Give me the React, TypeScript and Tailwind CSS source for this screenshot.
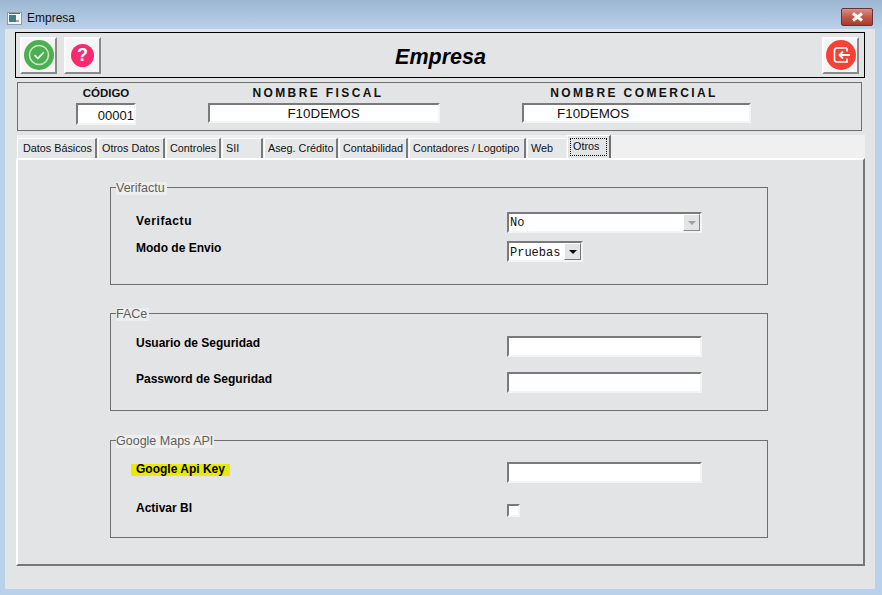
function Field({ className, children }: { className: string; children?: React.ReactNode }) {
    return (
        <div className={"border-2 border-t-[#7a7a7a] border-l-[#7a7a7a] border-r-[#f4f4f4] border-b-[#f4f4f4] bg-white " + className}>
            {children}
        </div>
    );
}

function ToolButton({ children, className = "" }: { children: React.ReactNode; className?: string }) {
    return (
        <div className={"flex h-[37px] w-[37px] items-center justify-center border-2 border-t-[#fbfbfb] border-l-[#fbfbfb] border-r-[#8a8a8a] border-b-[#8a8a8a] bg-[#f5f5f5] " + className}>
            {children}
        </div>
    );
}

function Tab({ label, width, active, noEdge }: { label: string; width: string; active?: boolean; noEdge?: boolean }) {
    if (active) {
        return (
            <div className={"relative z-10 ml-[1px] flex h-[23px] items-start border-t border-l border-white border-r-2 border-r-[#6f6f6f] bg-[#e3e4e6] p-[2px] " + width}>
                <span className="flex h-[18px] w-full items-center border border-dotted border-black pb-[2px] pl-[2px]">{label}</span>
            </div>
        );
    }
    return (
        <div className={"ml-[1px] flex h-[20px] items-center border-t border-l border-white bg-[#e6e7e8] pl-[3px] " + (noEdge ? "" : "border-r-2 border-r-[#7a7a7a] ") + width}>
            {label}
        </div>
    );
}

function Group({ title, legendWidth, children, className = "" }: { title: string; legendWidth: string; children: React.ReactNode; className?: string }) {
    return (
        <div className={"relative ml-[92px] h-[98px] w-[658px] border border-[#6f6f6f] " + className}>
            <span className={"absolute top-[-6px] left-[5px] h-[13px] bg-[#eeeeee] text-[12.5px] leading-[12px] font-normal text-[#5f5f5f] " + legendWidth}>{title}</span>
            {children}
        </div>
    );
}

function Label({ children, className = "" }: { children: React.ReactNode; className?: string }) {
    return <div className={"ml-[25px] w-[371px] text-[12px] leading-[14px] font-bold text-black " + className}>{children}</div>;
}

export default function App() {
    return (
        <div className="h-[595px] w-[882px] overflow-hidden bg-[#b9d1ea] font-['Liberation_Sans',Arial,sans-serif] text-[12px] text-[#111]">
            {/* barra de titulo */}
            <div className="flex h-[29px] items-center bg-gradient-to-b from-[#9db6d1] to-[#b9d1ea] pt-[7px] pl-[7px]">
                <svg width="15" height="13" viewBox="0 0 15 13">
                    <rect x="0.5" y="0.5" width="14" height="12" fill="#f4f4f4" stroke="#8f9aa5" />
                    <rect x="2" y="3" width="7" height="7" fill="#3f7f86" />
                    <rect x="9" y="8" width="3" height="2" fill="#9aa5ad" />
                    <rect x="2" y="1" width="11" height="1" fill="#5b6b78" />
                </svg>
                <span className="ml-[5px] text-[12px] text-[#111]">Empresa</span>
                <div className="mt-[1px] mr-[9px] ml-auto flex h-[18px] w-[32px] items-center justify-center self-start rounded-[2px] border border-[#6b2f35] bg-gradient-to-b from-[#d2928c] via-[#c0584a] to-[#a83a2e]">
                    <svg width="13" height="10" viewBox="0 0 13 10">
                        <path d="M2 1.5 L11 8.5 M11 1.5 L2 8.5" stroke="#ffffff" strokeWidth="3" />
                    </svg>
                </div>
            </div>

            {/* cuerpo */}
            <div className="mx-[5px] h-[560px] w-[870px] bg-[#e3e4e6] pt-[3px]">
                {/* toolbar */}
                <div className="ml-[10px] flex h-[46px] w-[850px] items-center border border-black pr-[5px] pl-[4px]">
                    <ToolButton>
                        <svg width="30" height="30" viewBox="0 0 30 30">
                            <circle cx="15" cy="15" r="15" fill="#4caf50" />
                            <circle cx="15" cy="15" r="9.5" fill="none" stroke="#c8e6c9" strokeWidth="1.6" />
                            <path d="M10.5 15.2 L13.8 18.5 L19.8 12.3" fill="none" stroke="#e8f5e9" strokeWidth="1.8" />
                        </svg>
                    </ToolButton>
                    <ToolButton className="ml-[7px]">
                        <div className="flex h-[23px] w-[23px] items-center justify-center rounded-full bg-[#f72a6e] text-[18px] font-bold text-white">?</div>
                    </ToolButton>
                    <div className="mt-[5px] flex-1 pr-[42px] text-center text-[21.5px] leading-none font-bold text-black italic">Empresa</div>
                    <ToolButton>
                        <svg width="30" height="30" viewBox="0 0 30 30">
                            <circle cx="15" cy="15" r="15" fill="#f44336" />
                            <path d="M21 8 H11 a2.5 2.5 0 0 0 -2.5 2.5 V19.5 a2.5 2.5 0 0 0 2.5 2.5 H21 V18.5 M21 11.5 V8" fill="none" stroke="#ffffff" strokeWidth="1.6" />
                            <path d="M24 15 H13.5 M17 11.5 L13.5 15 L17 18.5" fill="none" stroke="#ffffff" strokeWidth="1.8" />
                        </svg>
                    </ToolButton>
                </div>

                {/* cabecera */}
                <div className="mt-[4px] ml-[12px] flex h-[49px] w-[845px] border border-[#6f6f6f] font-bold">
                    <div className="ml-[58px] flex w-[60px] flex-col items-center">
                        <span className="mt-[3px] text-[11.5px] leading-[14px]">CÓDIGO</span>
                        <Field className="mt-[3px] h-[22px] w-[60px] text-right text-[13px] leading-[21px] font-normal">00001</Field>
                    </div>
                    <div className="ml-[72px] flex w-[232px] flex-col items-center">
                        <span className="mt-[3px] pr-[12px] text-[12px] leading-[14px] tracking-[2.4px]">NOMBRE FISCAL</span>
                        <Field className="mt-[3px] h-[20px] w-[232px] pr-[1px] text-center text-[13.4px] leading-[18px] font-normal">F10DEMOS</Field>
                    </div>
                    <div className="ml-[82px] flex w-[229px] flex-col items-center">
                        <span className="mt-[3px] pr-[5px] text-[12px] leading-[14px] tracking-[2.4px]">NOMBRE COMERCIAL</span>
                        <Field className="mt-[3px] h-[20px] w-[229px] pl-[33px] text-[13.4px] leading-[18px] font-normal">F10DEMOS</Field>
                    </div>
                </div>

                {/* pestañas */}
                <div className="mt-[4px] ml-[12px] flex h-[23px] w-[848px] items-end bg-[#f0f0f0] text-[10.8px] whitespace-nowrap text-[#111] [&>*:first-child]:ml-0 [&>*:first-child]:pl-[5px]">
                    <Tab label="Datos Básicos" width="w-[80px]" />
                    <Tab label="Otros Datos" width="w-[67px]" />
                    <Tab label="Controles" width="w-[55px]" />
                    <Tab label="SII" width="w-[41px]" />
                    <Tab label="Aseg. Crédito" width="w-[74px]" />
                    <Tab label="Contabilidad" width="w-[69px]" />
                    <Tab label="Contadores / Logotipo" width="w-[117px]" />
                    <Tab label="Web" width="w-[39px]" noEdge />
                    <Tab label="Otros" width="w-[44px]" active />
                </div>

                {/* panel */}
                <div className="ml-[11px] h-[408px] w-[849px] border-2 border-t-white border-r-[#777] border-b-[#777] border-l-white pt-[27px]">
                    <Group title="Verifactu" legendWidth="w-[51px]">
                        <div className="flex pt-[24px]">
                            <Label className="mt-[2px] tracking-[0.6px]">Verifactu</Label>
                            <Field className="relative h-[21px] w-[195px] pl-[1px] font-['Liberation_Mono',monospace] text-[12px] leading-[19px]">
                                No
                                <div className="absolute top-0 right-0 flex h-[17px] w-[17px] items-center justify-center border border-t-white border-r-[#888] border-b-[#888] border-l-white bg-[#e3e4e6]">
                                    <div className="h-0 w-0 border-x-[4px] border-t-[4px] border-x-transparent border-t-[#a0a0a0]" />
                                </div>
                            </Field>
                        </div>
                        <div className="mt-[8px] flex">
                            <Label>Modo de Envio</Label>
                            <Field className="relative h-[21px] w-[76px] pl-[1px] font-['Liberation_Mono',monospace] text-[12px] leading-[20px]">
                                Pruebas
                                <div className="absolute top-0 right-0 flex h-[17px] w-[17px] items-center justify-center border border-t-white border-r-[#777] border-b-[#777] border-l-white bg-[#e3e4e6]">
                                    <div className="h-0 w-0 border-x-[4px] border-t-[4px] border-x-transparent border-t-black" />
                                </div>
                            </Field>
                        </div>
                    </Group>

                    <Group title="FACe" legendWidth="w-[33px]" className="mt-[28px]">
                        <div className="flex pt-[22px]">
                            <Label>Usuario de Seguridad</Label>
                            <Field className="h-[21px] w-[195px]" />
                        </div>
                        <div className="mt-[15px] flex">
                            <Label>Password de Seguridad</Label>
                            <Field className="h-[21px] w-[195px]" />
                        </div>
                    </Group>

                    <Group title="Google Maps API" legendWidth="w-[98px]" className="mt-[29px]">
                        <div className="flex pt-[21px]">
                            <Label>
                                <span className="ml-[-5px] inline-block h-[12px] w-[99px] bg-[#e8ea00] pl-[5px] leading-[10px]">Google Api Key</span>
                            </Label>
                            <Field className="h-[21px] w-[195px]" />
                        </div>
                        <div className="mt-[21px] flex">
                            <Label className="mt-[-3px]">Activar BI</Label>
                            <Field className="h-[13px] w-[13px] bg-[#eceef0]" />
                        </div>
                    </Group>
                </div>
            </div>
        </div>
    );
}
